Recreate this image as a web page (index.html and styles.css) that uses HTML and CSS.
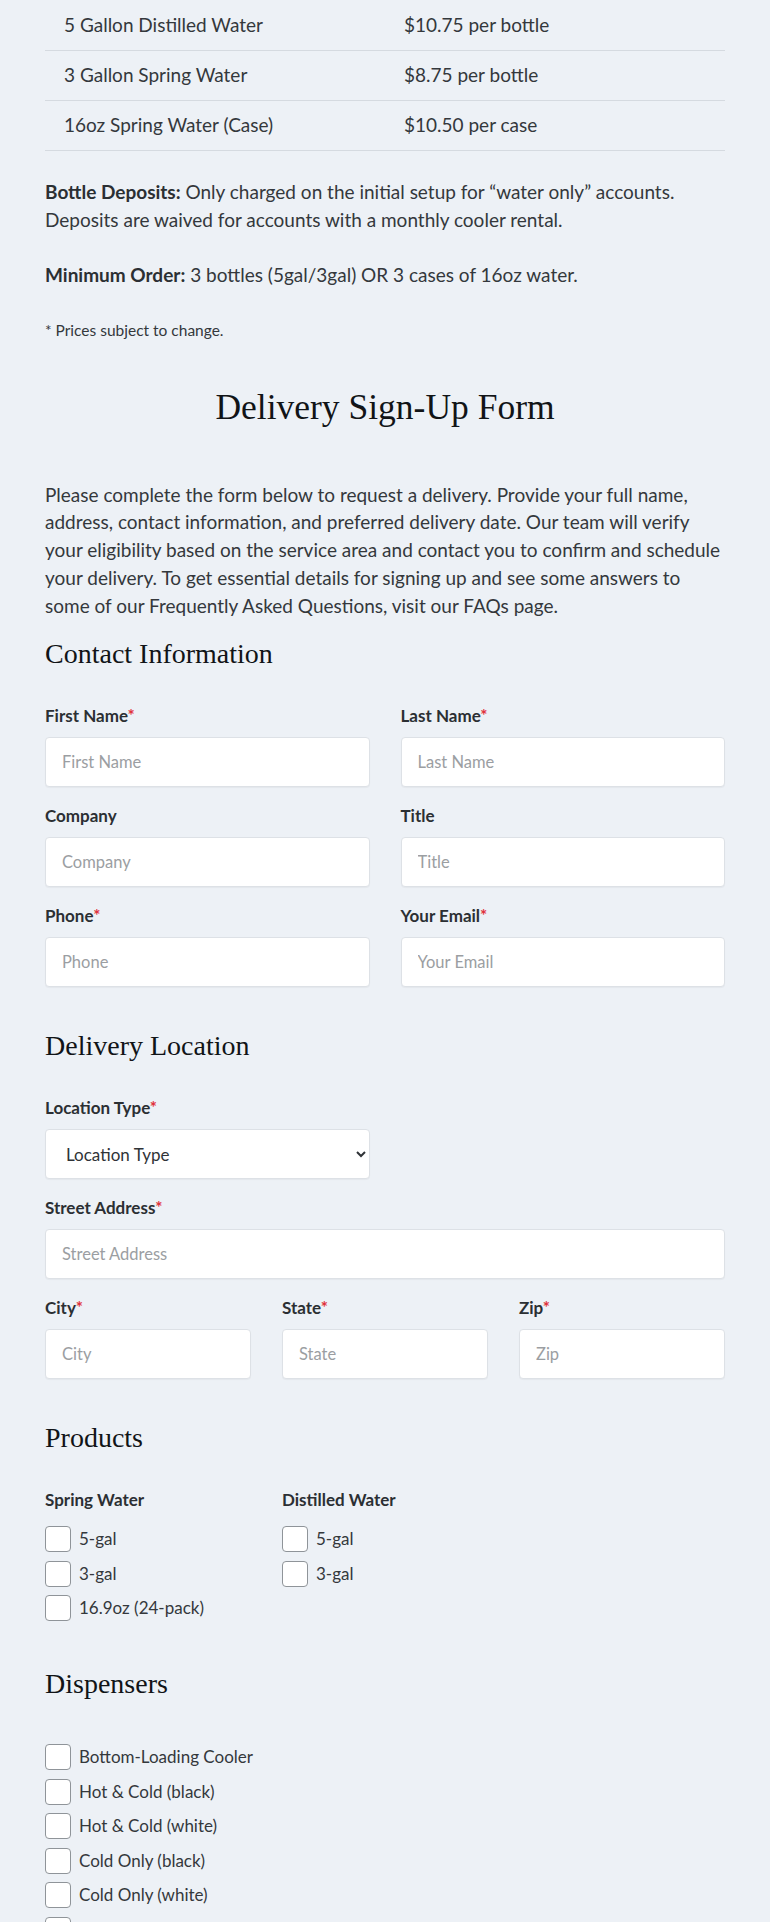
FILE: index.html
```html
<!DOCTYPE html>
<html lang="en">
<head>
<meta charset="utf-8">
<title>Delivery Sign-Up Form</title>
<link rel="stylesheet" href="styles.css">
</head>
<body>
<div class="page">
  <table class="prices">
    <tr><td>5 Gallon Distilled Water</td><td>$10.75 per bottle</td></tr>
    <tr><td>3 Gallon Spring Water</td><td>$8.75 per bottle</td></tr>
    <tr><td>16oz Spring Water (Case)</td><td>$10.50 per case</td></tr>
  </table>

  <p class="note"><strong>Bottle Deposits:</strong> Only charged on the initial setup for “water only” accounts. Deposits are waived for accounts with a monthly cooler rental.</p>
  <p class="note"><strong>Minimum Order:</strong> 3 bottles (5gal/3gal) OR 3 cases of 16oz water.</p>
  <p class="small">* Prices subject to change.</p>

  <h1 class="title">Delivery Sign-Up Form</h1>

  <p class="intro">Please complete the form below to request a delivery. Provide your full name, address, contact information, and preferred delivery date. Our team will verify your eligibility based on the service area and contact you to confirm and schedule your delivery. To get essential details for signing up and see some answers to some of our Frequently Asked Questions, visit our FAQs page.</p>

  <form class="form">
    <h2 class="section first">Contact Information</h2>
    <div class="grid two">
      <div class="field"><label class="label">First Name<span class="req">*</span></label><input class="input" type="text" placeholder="First Name"></div>
      <div class="field"><label class="label">Last Name<span class="req">*</span></label><input class="input" type="text" placeholder="Last Name"></div>
      <div class="field"><label class="label">Company</label><input class="input" type="text" placeholder="Company"></div>
      <div class="field"><label class="label">Title</label><input class="input" type="text" placeholder="Title"></div>
      <div class="field"><label class="label">Phone<span class="req">*</span></label><input class="input" type="text" placeholder="Phone"></div>
      <div class="field"><label class="label">Your Email<span class="req">*</span></label><input class="input" type="text" placeholder="Your Email"></div>
    </div>

    <h2 class="section">Delivery Location</h2>
    <div class="grid two">
      <div class="field"><label class="label">Location Type<span class="req">*</span></label>
        <select class="input select"><option>Location Type</option><option>Residential</option><option>Commercial</option></select>
      </div>
    </div>
    <div class="grid one">
      <div class="field"><label class="label">Street Address<span class="req">*</span></label><input class="input" type="text" placeholder="Street Address"></div>
    </div>
    <div class="grid three">
      <div class="field"><label class="label">City<span class="req">*</span></label><input class="input" type="text" placeholder="City"></div>
      <div class="field"><label class="label">State<span class="req">*</span></label><input class="input" type="text" placeholder="State"></div>
      <div class="field"><label class="label">Zip<span class="req">*</span></label><input class="input" type="text" placeholder="Zip"></div>
    </div>

    <h2 class="section">Products</h2>
    <div class="grid three products">
      <div class="group">
        <div class="label">Spring Water</div>
        <div class="checks">
          <label class="check"><input type="checkbox"><span class="box"></span>5-gal</label>
          <label class="check"><input type="checkbox"><span class="box"></span>3-gal</label>
          <label class="check"><input type="checkbox"><span class="box"></span>16.9oz (24-pack)</label>
        </div>
      </div>
      <div class="group">
        <div class="label">Distilled Water</div>
        <div class="checks">
          <label class="check"><input type="checkbox"><span class="box"></span>5-gal</label>
          <label class="check"><input type="checkbox"><span class="box"></span>3-gal</label>
        </div>
      </div>
    </div>

    <h2 class="section dispensers-title">Dispensers</h2>
    <div class="checks dispensers">
      <label class="check"><input type="checkbox"><span class="box"></span>Bottom-Loading Cooler</label>
      <label class="check"><input type="checkbox"><span class="box"></span>Hot &amp; Cold (black)</label>
      <label class="check"><input type="checkbox"><span class="box"></span>Hot &amp; Cold (white)</label>
      <label class="check"><input type="checkbox"><span class="box"></span>Cold Only (black)</label>
      <label class="check"><input type="checkbox"><span class="box"></span>Cold Only (white)</label>
      <label class="check"><input type="checkbox"><span class="box"></span>Filtration Unit</label>
    </div>
  </form>
</div>
</body>
</html>
```

FILE: styles.css
```css
* { box-sizing: border-box; }

html, body {
  margin: 0;
  padding: 0;
  background: #edf1f6;
}

body {
  font-family: Lato, "Liberation Sans", sans-serif;
  color: #34383c;
  font-size: 19px;
  line-height: 28px;
}

.page {
  padding: 0 45px 40px;
}

.prices {
  width: 100%;
  border-collapse: collapse;
  font-size: 19px;
}

.prices td {
  height: 50px;
  padding: 0 19px;
  border-bottom: 1px solid #d5dae0;
  vertical-align: middle;
  width: 50%;
}

.note {
  margin: 27px 0 0;
}

.note strong {
  font-weight: 700;
  color: #2b2f33;
}

.small {
  margin: 31px 0 0;
  font-size: 15.5px;
  line-height: 21px;
}

.title {
  margin: 43px 0 0;
  text-align: center;
  font-family: "Liberation Serif", "DejaVu Serif", serif;
  font-weight: 400;
  font-size: 35.5px;
  line-height: 46px;
  color: #111417;
}

.intro {
  margin: 51px 0 0;
  line-height: 27.8px;
}

.section {
  margin: 42px 0 0;
  font-family: "Liberation Serif", "DejaVu Serif", serif;
  font-weight: 400;
  font-size: 28px;
  line-height: 34px;
  color: #111417;
}

.section.first {
  margin-top: 18px;
}

.section.dispensers-title {
  margin-top: 46px;
}

.grid {
  display: grid;
  column-gap: 31px;
  row-gap: 19px;
  margin-top: 35px;
}

.section + .grid {
  margin-top: 35px;
}

.grid + .grid {
  margin-top: 19px;
}

.grid.two { grid-template-columns: 1fr 1fr; }
.grid.one { grid-template-columns: 1fr; }
.grid.three { grid-template-columns: 1fr 1fr 1fr; }

.field {
  display: flex;
  flex-direction: column;
}

.label {
  display: block;
  font-size: 17px;
  line-height: 20px;
  font-weight: 700;
  color: #2b2f33;
  margin-bottom: 11px;
}

.req {
  color: #e0303a;
}

.input {
  display: block;
  width: 100%;
  height: 50px;
  margin: 0;
  padding: 0 16px;
  font-family: Lato, "Liberation Sans", sans-serif;
  font-size: 16.5px;
  color: #34383c;
  background: #ffffff;
  border: 1px solid #dde1e6;
  border-radius: 4px;
  box-shadow: 0 1px 1px rgba(0, 0, 0, 0.04);
  outline: none;
}

.input::placeholder {
  color: #9b9ea2;
}

.select {
  padding: 0 14px 0 16px;
  font-size: 17px;
  color: #2f3337;
}

.products .label {
  margin-bottom: 16px;
}

.checks {
  display: flex;
  flex-direction: column;
  gap: 8.5px;
}

.section + .checks.dispensers {
  margin-top: 43px;
}

.check {
  display: flex;
  align-items: center;
  gap: 8px;
  height: 26px;
  font-size: 17px;
  line-height: 20px;
  color: #34383c;
  cursor: pointer;
}

.check input {
  position: absolute;
  opacity: 0;
  width: 0;
  height: 0;
  margin: 0;
}

.box {
  flex: none;
  width: 26px;
  height: 26px;
  background: #ffffff;
  border: 1px solid #8f9499;
  border-radius: 4px;
}
```
